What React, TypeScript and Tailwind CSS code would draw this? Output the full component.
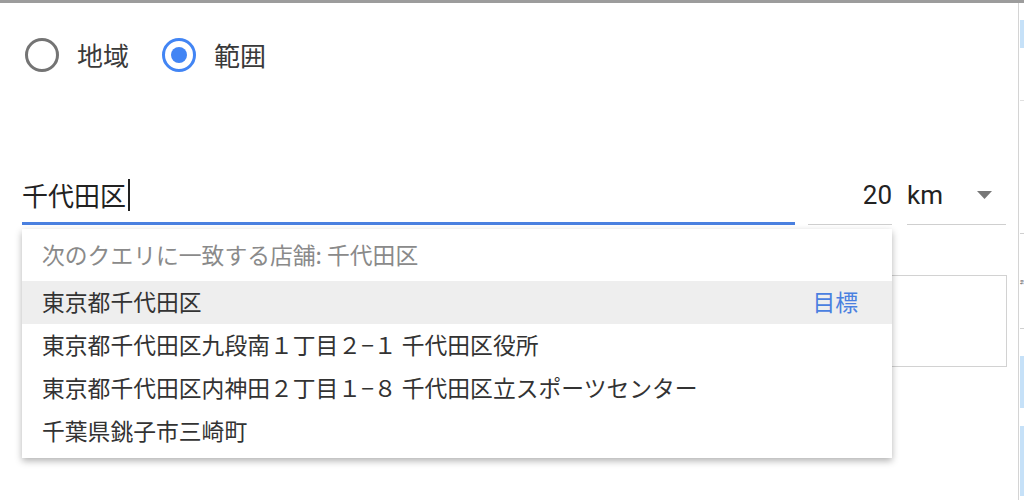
import React from "react";

const suggestions = [
  "東京都千代田区九段南１丁目２−１ 千代田区役所",
  "東京都千代田区内神田２丁目１−８ 千代田区立スポーツセンター",
  "千葉県銚子市三崎町",
];

function Radio({ checked, label }: { checked?: boolean; label: string }) {
  return (
    <label className="flex items-center">
      <span
        className={`flex h-[34px] w-[34px] items-center justify-center rounded-full border-[3px] ${
          checked ? "border-[#4285f4]" : "border-[#747474]"
        }`}
      >
        {checked && <span className="h-[16px] w-[16px] rounded-full bg-[#4285f4]" />}
      </span>
      <span className="ml-[18px] text-[26px] leading-[34px] text-[#3a3a3a]">{label}</span>
    </label>
  );
}

export default function App() {
  return (
    <div className="h-[500px] w-[1024px] overflow-hidden bg-white font-['Noto_Sans_CJK_JP','Noto_Sans',sans-serif]">
      <div className="h-[3px] bg-[#9c9c9c]" />
      <div className="flex h-[497px]">
        {/* main form panel */}
        <div className="relative w-[1019px] border-r border-[#d4d4d4]">
          <div className="flex items-center gap-[33px] pl-[25px] pt-[35px]">
            <Radio label="地域" />
            <Radio checked label="範囲" />
          </div>

          <div className="mt-[103px] flex items-end pl-[22px]">
            <div className="w-[773px] border-b-[3px] border-[#4a80e0] pb-[7px]">
              <div className="flex h-[40px] items-center text-[26px] leading-[40px] text-[#222]">
                千代田区
                <span className="ml-[2px] h-[32px] w-[2px] bg-[#222]" />
              </div>
            </div>
            <div className="ml-[13px] w-[84px] border-b border-[#cfcfcf] pb-[9px]">
              <div className="text-right font-['Roboto',sans-serif] text-[26px] leading-[40px] text-[#222]">
                20
              </div>
            </div>
            <div className="ml-[15px] flex w-[99px] items-center justify-between border-b border-[#cfcfcf] pb-[9px] pr-[14px]">
              <span className="font-['Roboto',sans-serif] text-[26px] leading-[40px] text-[#222]">km</span>
              <svg width="15" height="8" viewBox="0 0 15 8">
                <path d="M0 0 L15 0 L7.5 8 Z" fill="#777" />
              </svg>
            </div>
          </div>

          {/* box sitting under the suggestion list */}
          <div className="ml-[22px] mt-[50px] h-[92px] w-[985px] border border-[#d2d2d2]" />

          {/* autocomplete suggestions */}
          <div className="absolute left-[22px] top-[226px] w-[870px] bg-white pb-[5px] shadow-[0_3px_7px_rgba(0,0,0,0.3)]">
            <div className="h-[52px] pl-[20px] pt-[12px] text-[22.8px] leading-[28px] text-[#8a8a8a]">
              次のクエリに一致する店舗: 千代田区
            </div>
            <div className="flex h-[43px] items-center justify-between bg-[#eeeeee] pl-[20px] pr-[34px] text-[22.8px] text-[#333]">
              <span>東京都千代田区</span>
              <span className="text-[#4a80e0]">目標</span>
            </div>
            {suggestions.map((s) => (
              <div key={s} className="flex h-[43px] items-center pl-[20px] text-[22.8px] text-[#333]">
                {s}
              </div>
            ))}
          </div>
        </div>

        {/* sliver of the neighbouring panel */}
        <div className="flex w-[5px] flex-col overflow-hidden pl-[1px]">
          <div className="mt-[17px] h-[28px] bg-[#c6e1f8]" />
          <div className="mt-[52px] h-px bg-[#e0e0e0]" />
          <div className="mt-[132px] h-px bg-[#d0d0d0]" />
          <div className="mt-[44px] text-[4px] leading-[8px] text-[#333]">票</div>
          <div className="mt-[42px] h-px bg-[#d0d0d0]" />
          <div className="mt-[27px] h-[52px] bg-[#c6e1f8]" />
          <div className="mt-[18px] h-[70px] bg-[#c6e1f8]" />
        </div>
      </div>
    </div>
  );
}
